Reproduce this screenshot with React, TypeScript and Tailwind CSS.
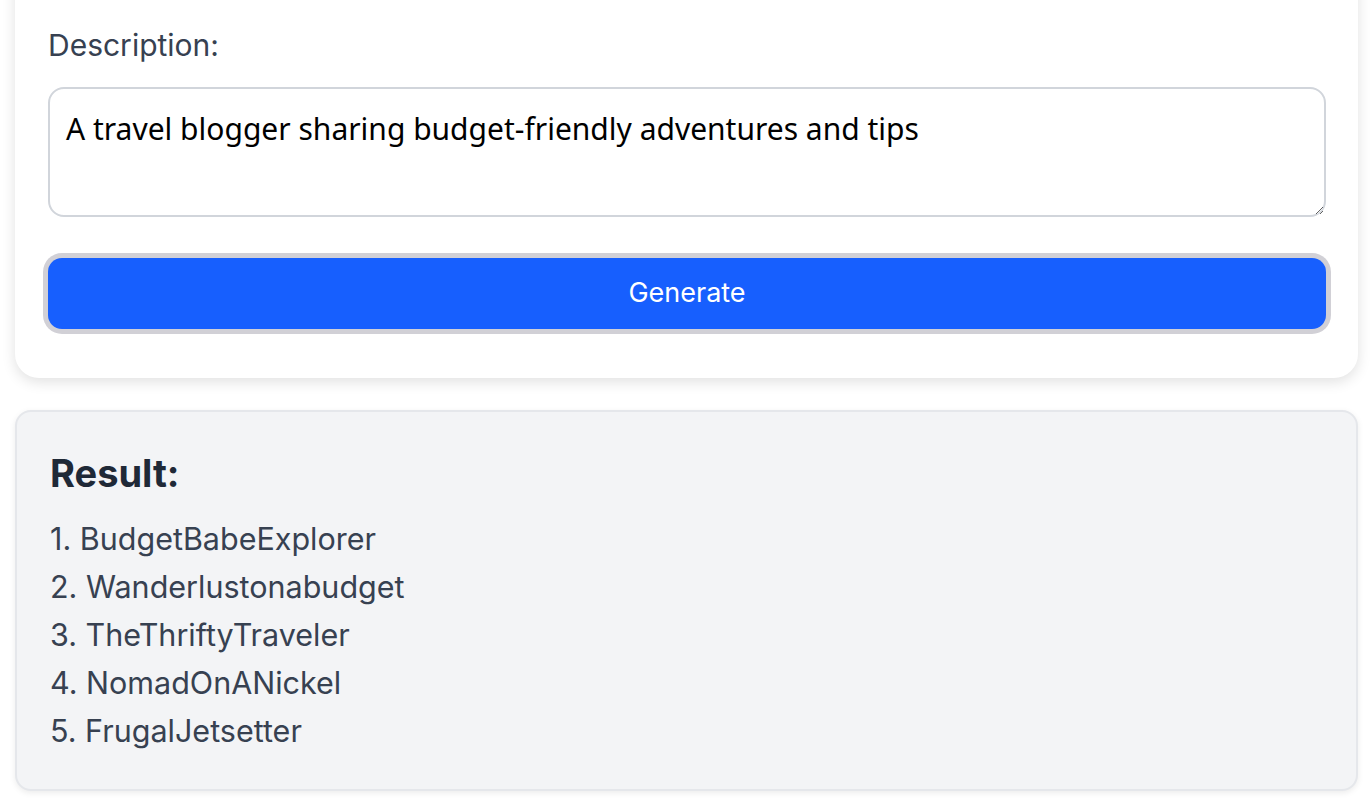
import React, { useState } from 'react';

const names = [
  'BudgetBabeExplorer',
  'Wanderlustonabudget',
  'TheThriftyTraveler',
  'NomadOnANickel',
  'FrugalJetsetter',
];

const App: React.FC = () => {
  const [description, setDescription] = useState(
    'A travel blogger sharing budget-friendly adventures and tips'
  );

  return (
    <div className="min-h-screen bg-white pl-[15px] pr-[14px] pb-[18px] font-['Inter',sans-serif]">
      {/* form card, its top runs off the screen */}
      <div className="-mt-[40px] rounded-[24px] bg-white pl-[33px] pr-[32px] pt-[63px] pb-[49px] shadow-[0_4px_14px_rgba(0,0,0,0.12)]">
        <label className="block text-[30px] leading-[44px] text-[#374151]">Description:</label>
        <textarea
          value={description}
          onChange={(e) => setDescription(e.target.value)}
          className="mt-[20px] block h-[130px] w-full rounded-[16px] border-2 border-[#d1d5db] px-[16px] pt-[20px] pb-[8px] font-['Noto_Sans',sans-serif] text-[30px] leading-[40px] text-black outline-none"
        />
        <button className="mt-[41px] block h-[71px] w-full rounded-[14px] bg-[#175ffe] text-[27px] text-white ring-[5px] ring-[#d1d0d6]">
          Generate
        </button>
      </div>

      <div className="mt-[32px] rounded-[16px] border-2 border-[#e5e7eb] bg-[#f3f4f6] pl-[33px] pr-[32px] pt-[35px] pb-[34px] shadow-[0_2px_6px_rgba(0,0,0,0.08)]">
        <h3 className="text-[38px] font-bold leading-[52px] text-[#1f2937]">Result:</h3>
        <ul className="mt-[16px] text-[30.5px] leading-[48px] text-[#374151]">
          {names.map((n, i) => (
            <li key={n}>
              {i + 1}. {n}
            </li>
          ))}
        </ul>
      </div>
    </div>
  );
};

export default App;
